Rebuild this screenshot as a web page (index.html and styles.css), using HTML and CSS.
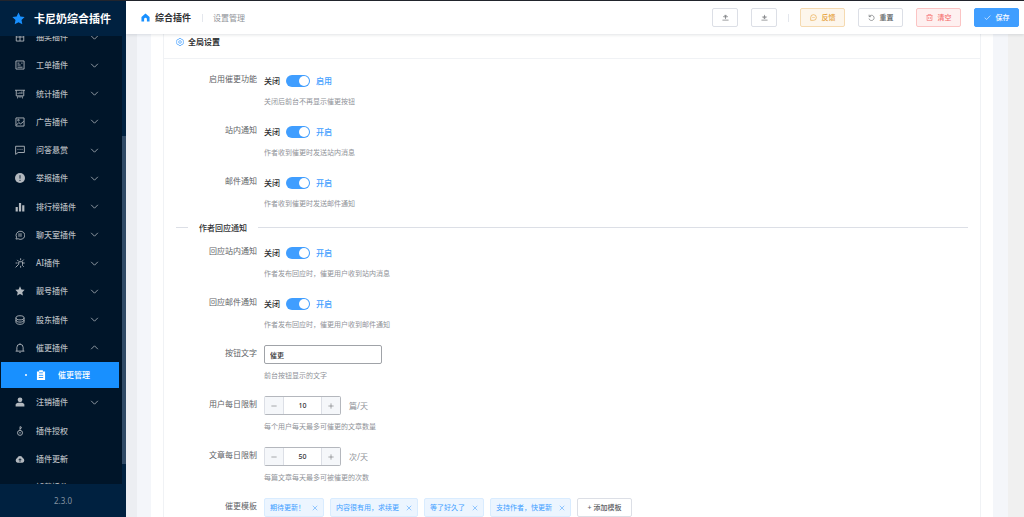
FILE: index.html
```html
<!DOCTYPE html>
<html lang="zh-CN">
<head>
<meta charset="utf-8">
<title>综合插件 - 设置管理</title>
<link rel="stylesheet" href="styles.css">
</head>
<body>
<svg class="sprite" aria-hidden="true">
  <symbol id="down" viewBox="0 0 16 16"><path d="M2 5l6 6 6-6"/></symbol>
  <symbol id="up" viewBox="0 0 16 16"><path d="M2 11l6-6 6 6"/></symbol>
  <symbol id="grid" viewBox="0 0 16 16"><path d="M2 1.500h12v13H2zM2 8h12M8 1.500v13"/></symbol>
  <symbol id="ticket" viewBox="0 0 16 16"><path d="M1.500 1.500h13v13h-13zM4 5h3M4 8h5M4 11.500h8M10 5h2"/></symbol>
  <symbol id="board" viewBox="0 0 16 16"><path d="M0 2h16M2 2v9h12V2M5 11l-1 4M11 11l1 4M5 8V6M8 8V5M11 8V4M8 11v3"/></symbol>
  <symbol id="image" viewBox="0 0 16 16"><path d="M1.500 1.500h13v13h-13zM2 13l4-4 3 2 5-4"/><circle cx="5.500" cy="5" r="1.300"/></symbol>
  <symbol id="chat" viewBox="0 0 16 16"><path d="M1 2h14v10H5l-4 3zM4 7h1.500M7.300 7h1.500M10.500 7H12"/></symbol>
  <symbol id="warn" viewBox="0 0 16 16"><circle class="fill" cx="8" cy="8" r="8"/><path class="cut" d="M8 3.500V9M8 11v1.800"/></symbol>
  <symbol id="bars" viewBox="0 0 16 16"><path class="fill" d="M1 8h3.500v7H1zM6.300 1.500h3.500V15H6.300zM11.500 5H15v10h-3.500z"/></symbol>
  <symbol id="round" viewBox="0 0 16 16"><path d="M1.500 14.500l1-3A7 6.500 0 1 1 5 14zM5 6.500h6M5 9.500h6"/></symbol>
  <symbol id="dots" viewBox="0 0 16 16"><path d="M1.500 14.500V8A6.500 6.500 0 1 1 8 14.500zM4.500 8H6M7.300 8h1.500M10 8h1.500"/></symbol>
  <symbol id="magic" viewBox="0 0 16 16"><path d="M1 15l5-5M9 .5v3M15.500 8h-3M3.500 3l2 2M14 2.500l-2.500 2.500M14 14l-2.500-2.500M1 8h3M9 12.500v3M6 6l6 0M12 6v5M6 6v4"/></symbol>
  <symbol id="star" viewBox="0 0 16 16"><path class="fill" d="M8 .5l2.300 4.900 5.200.7-3.800 3.700 1 5.400L8 12.600l-4.700 2.600 1-5.400L.5 6.100l5.200-.7z"/></symbol>
  <symbol id="coins" viewBox="0 0 16 16"><ellipse cx="8" cy="4.500" rx="6.500" ry="3.300"/><path d="M1.500 4.500v7c0 4.500 13 4.500 13 0v-7M1.500 8c0 4.500 13 4.500 13 0"/></symbol>
  <symbol id="bell" viewBox="0 0 16 16"><path d="M1 13h14M3 13V7a5 5 0 0 1 10 0v6M8 2V.5M7 15.300h2"/></symbol>
  <symbol id="clip" viewBox="0 0 16 16"><path class="fill" d="M1.500 2.500H5V.5h6v2h3.500V16h-13z"/><path class="cutblue" d="M5 4.500h6M4.500 8.500h7M4.500 12h7"/></symbol>
  <symbol id="user" viewBox="0 0 16 16"><circle class="fill" cx="8" cy="4.500" r="3.800"/><path class="fill" d="M1 15v-2.500c0-2 2-3.500 4-3.500h6c2 0 4 1.500 4 3.500V15z"/></symbol>
  <symbol id="key" viewBox="0 0 16 16"><circle cx="8" cy="11" r="4"/><circle cx="8" cy="11" r=".5"/><path d="M8 7V1l3 1.500M8 4h2"/></symbol>
  <symbol id="cloud" viewBox="0 0 16 16"><path class="fill" d="M4 14a4 4 0 0 1-.5-7.500 4.700 4.700 0 0 1 9 0A4 4 0 0 1 12 14z"/><path class="cut" d="M8 12.500V8M5.800 9.800L8 7.500l2.200 2.300"/></symbol>
  <symbol id="home" viewBox="0 0 16 16"><path class="fill" d="M8 1L.8 7v8.300h4.700V11a2.500 2.500 0 0 1 5 0v4.300h4.700V7z"/></symbol>
  <symbol id="upload" viewBox="0 0 16 16"><path d="M1 14h14M8 11.500V3M3.500 6.500L8 2l4.500 4.500z"/></symbol>
  <symbol id="download" viewBox="0 0 16 16"><path d="M1 14h14M8 2v8M3.500 6.500L8 11l4.500-4.500z"/></symbol>
  <symbol id="undo" viewBox="0 0 16 16"><path d="M2.500 1.500V6H7M3 5.500a6 6 0 1 1-.8 5"/></symbol>
  <symbol id="trash" viewBox="0 0 16 16"><path d="M1 3.500h14M5 3V1h6v2M2.500 3.500V15h11V3.500M6 7v4.500M10 7v4.500"/></symbol>
  <symbol id="check" viewBox="0 0 16 16"><path d="M1.500 8.500l4.500 4 8.500-9"/></symbol>
  <symbol id="close" viewBox="0 0 16 16"><path d="M2 2l12 12M14 2L2 14"/></symbol>
  <symbol id="minus" viewBox="0 0 16 16"><path d="M1 8h14"/></symbol>
  <symbol id="plus" viewBox="0 0 16 16"><path d="M1 8h14M8 1v14"/></symbol>
  <symbol id="gear" viewBox="0 0 16 16"><path d="M6 1h4l1 2 2.500.2 1.700 3.200L14 8l1.200 1.600-1.700 3.200-2.500.2-1 2H6l-1-2-2.500-.2L.8 9.600 2 8 .8 6.400l1.700-3.200L5 3z"/><circle cx="8" cy="8" r="2.700"/></symbol>
</svg>

<div class="app">
  <aside class="side">
    <div class="brand"><svg class="brand-icon"><use href="#star"/></svg><span>卡尼奶综合插件</span></div>
    <nav class="nav">
      <ul class="menu">
        <li><button class="item"><svg class="icon"><use href="#grid"/></svg><span>抽奖插件</span><svg class="arrow"><use href="#down"/></svg></button></li>
        <li><button class="item"><svg class="icon"><use href="#ticket"/></svg><span>工单插件</span><svg class="arrow"><use href="#down"/></svg></button></li>
        <li><button class="item"><svg class="icon"><use href="#board"/></svg><span>统计插件</span><svg class="arrow"><use href="#down"/></svg></button></li>
        <li><button class="item"><svg class="icon"><use href="#image"/></svg><span>广告插件</span><svg class="arrow"><use href="#down"/></svg></button></li>
        <li><button class="item"><svg class="icon"><use href="#chat"/></svg><span>问答悬赏</span><svg class="arrow"><use href="#down"/></svg></button></li>
        <li><button class="item"><svg class="icon"><use href="#warn"/></svg><span>举报插件</span><svg class="arrow"><use href="#down"/></svg></button></li>
        <li><button class="item"><svg class="icon"><use href="#bars"/></svg><span>排行榜插件</span><svg class="arrow"><use href="#down"/></svg></button></li>
        <li><button class="item"><svg class="icon"><use href="#round"/></svg><span>聊天室插件</span><svg class="arrow"><use href="#down"/></svg></button></li>
        <li><button class="item"><svg class="icon"><use href="#magic"/></svg><span>AI插件</span><svg class="arrow"><use href="#down"/></svg></button></li>
        <li><button class="item"><svg class="icon"><use href="#star"/></svg><span>靓号插件</span><svg class="arrow"><use href="#down"/></svg></button></li>
        <li><button class="item"><svg class="icon"><use href="#coins"/></svg><span>股东插件</span><svg class="arrow"><use href="#down"/></svg></button></li>
        <li><button class="item" aria-expanded="true"><svg class="icon"><use href="#bell"/></svg><span>催更插件</span><svg class="arrow"><use href="#up"/></svg></button></li>
        <li><a class="sub" href="#"><i class="dot"></i><svg class="icon"><use href="#clip"/></svg><span>催更管理</span></a></li>
        <li><button class="item"><svg class="icon"><use href="#user"/></svg><span>注销插件</span><svg class="arrow"><use href="#down"/></svg></button></li>
        <li><a class="item" href="#"><svg class="icon"><use href="#key"/></svg><span>插件授权</span></a></li>
        <li><a class="item" href="#"><svg class="icon"><use href="#cloud"/></svg><span>插件更新</span></a></li>
        <li><a class="item" href="#"><svg class="icon"></svg><span>卸载插件</span></a></li>
      </ul>
      <div class="track"><div class="thumb"></div></div>
    </nav>
    <div class="version">2.3.0</div>
  </aside>

  <div class="main">
    <header class="bar">
      <svg class="home"><use href="#home"/></svg>
      <h1 class="title">综合插件</h1>
      <i class="sep"></i>
      <span class="crumb">设置管理</span>
      <div class="actions">
        <button class="btn square" aria-label="上传"><svg class="small"><use href="#upload"/></svg></button>
        <button class="btn square" aria-label="下载"><svg class="small"><use href="#download"/></svg></button>
        <i class="sep"></i>
        <button class="btn warning"><svg class="small"><use href="#dots"/></svg>反馈</button>
        <button class="btn"><svg class="small"><use href="#undo"/></svg>重置</button>
        <button class="btn danger"><svg class="small"><use href="#trash"/></svg>清空</button>
        <button class="btn primary"><svg class="small"><use href="#check"/></svg>保存</button>
      </div>
    </header>

    <main class="page">
      <div class="sheet">
        <section class="card">
          <h2 class="card-title"><svg class="gear"><use href="#gear"/></svg>全局设置</h2>
          <form class="form">
            <div class="row"><label class="label" for="enable">启用催更功能</label><div class="field"><div class="control"><span class="off">关闭</span><input class="switch" id="enable" type="checkbox" checked><span class="on">启用</span></div><p class="help">关闭后前台不再显示催更按钮</p></div></div>
            <div class="row"><label class="label" for="site">站内通知</label><div class="field"><div class="control"><span class="off">关闭</span><input class="switch" id="site" type="checkbox" checked><span class="on">开启</span></div><p class="help">作者收到催更时发送站内消息</p></div></div>
            <div class="row"><label class="label" for="mail">邮件通知</label><div class="field"><div class="control"><span class="off">关闭</span><input class="switch" id="mail" type="checkbox" checked><span class="on">开启</span></div><p class="help">作者收到催更时发送邮件通知</p></div></div>
            <h3 class="divider">作者回应通知</h3>
            <div class="row"><label class="label" for="rsite">回应站内通知</label><div class="field"><div class="control"><span class="off">关闭</span><input class="switch" id="rsite" type="checkbox" checked><span class="on">开启</span></div><p class="help">作者发布回应时，催更用户收到站内消息</p></div></div>
            <div class="row"><label class="label" for="rmail">回应邮件通知</label><div class="field"><div class="control"><span class="off">关闭</span><input class="switch" id="rmail" type="checkbox" checked><span class="on">开启</span></div><p class="help">作者发布回应时，催更用户收到邮件通知</p></div></div>
            <div class="row"><label class="label" for="text">按钮文字</label><div class="field"><div class="control"><input class="text" id="text" type="text" value="催更"></div><p class="help">前台按钮显示的文字</p></div></div>
            <div class="row"><label class="label" for="user-limit">用户每日限制</label><div class="field"><div class="control"><div class="number"><button type="button" aria-label="减少"><svg><use href="#minus"/></svg></button><input id="user-limit" type="text" value="10"><button type="button" aria-label="增加"><svg><use href="#plus"/></svg></button></div><span class="unit">篇/天</span></div><p class="help">每个用户每天最多可催更的文章数量</p></div></div>
            <div class="row"><label class="label" for="post-limit">文章每日限制</label><div class="field"><div class="control"><div class="number"><button type="button" aria-label="减少"><svg><use href="#minus"/></svg></button><input id="post-limit" type="text" value="50"><button type="button" aria-label="增加"><svg><use href="#plus"/></svg></button></div><span class="unit">次/天</span></div><p class="help">每篇文章每天最多可被催更的次数</p></div></div>
            <div class="row"><span class="label">催更模板</span><div class="field"><div class="control tags">
              <span class="tag">期待更新！<button type="button" aria-label="删除"><svg><use href="#close"/></svg></button></span>
              <span class="tag">内容很有用，求续更<button type="button" aria-label="删除"><svg><use href="#close"/></svg></button></span>
              <span class="tag">等了好久了<button type="button" aria-label="删除"><svg><use href="#close"/></svg></button></span>
              <span class="tag">支持作者，快更新<button type="button" aria-label="删除"><svg><use href="#close"/></svg></button></span>
              <button type="button" class="btn add">+ 添加模板</button>
            </div></div></div>
          </form>
        </section>
      </div>
    </main>
  </div>
</div>
</body>
</html>
```

FILE: styles.css
```css
* { box-sizing: border-box; }
body {
  margin: 0;
  font: 8px/12px "Noto Sans", "Noto Sans CJK SC", sans-serif;
  color: #303133;
  background: #f0f0f0;
  overflow: hidden;
}
button, input { font: inherit; color: inherit; margin: 0; padding: 0; border: 0; background: none; }
a { color: inherit; text-decoration: none; }
ul, p, h1, h2, h3 { margin: 0; padding: 0; font-size: inherit; list-style: none; }
svg { fill: none; stroke: currentColor; stroke-width: 1.4; flex: none; }
.fill { fill: currentColor; stroke: none; }
.cut { stroke: #001529; }
.cutblue { stroke: #1890ff; }
.sprite { display: none; }

.app { display: flex; height: 100vh; border-top: 1px solid #22252d; }

/* sidebar */
.side {
  display: flex;
  flex-direction: column;
  flex: none;
  width: 126px;
  background: #001529;
  color: #b3b9bf;
}
.brand {
  display: flex;
  align-items: center;
  gap: 9px;
  height: 35px;
  padding-left: 12px;
  background: #002140;
  color: #fff;
  font-size: 11px;
  font-weight: 700;
  line-height: 16px;
}
.brand-icon { width: 13px; height: 13px; color: #1890ff; }
.nav { display: flex; flex: 1; min-height: 0; overflow: hidden; }
.menu {
  display: flex;
  flex-direction: column;
  flex: 1;
  justify-content: space-between;
  height: calc(100% + 30px);
  margin-top: -13px;
}
.item {
  display: flex;
  align-items: center;
  width: 100%;
  height: 28px;
  padding: 0 23px 0 15px;
  font-weight: 500;
  text-align: left;
}
.icon { width: 10px; height: 10px; }
.item span { flex: 1; margin-left: 11px; }
.arrow { width: 9px; height: 9px; }
.sub {
  display: flex;
  align-items: center;
  height: 26px;
  margin: 0 3px 0 1px;
  padding-left: 24px;
  background: #1890ff;
  color: #fff;
  font-weight: 500;
}
.dot { width: 2px; height: 2px; margin-right: 9px; border-radius: 50%; background: #fff; }
.sub span { margin-left: 12px; }
.track { width: 4px; padding-top: 100px; background: #002140; }
.thumb { height: 328px; background: #304a66; }
.version {
  display: flex;
  align-items: center;
  justify-content: center;
  height: 33px;
  background: #002140;
  color: #8492a1;
}

/* top bar */
.main { display: flex; flex-direction: column; flex: 1; min-width: 0; }
.bar {
  display: flex;
  align-items: center;
  flex: none;
  height: 33px;
  padding: 0 5px 0 15px;
  background: #fff;
  box-shadow: 0 1px 3px rgba(0, 21, 41, .12);
  z-index: 1;
}
.home { width: 9px; height: 9px; margin-right: 5px; color: #1890ff; }
.title { font-size: 9px; font-weight: 600; }
.sep { width: 1px; height: 8px; background: #e4e7ed; }
.title + .sep { margin: 0 10px 0 11px; }
.crumb { color: #909399; }
.actions { display: flex; align-items: center; gap: 13px; margin-left: auto; }
.actions .sep { margin: 0 -2px; }
.btn {
  display: flex;
  align-items: center;
  justify-content: center;
  gap: 5px;
  width: 45px;
  height: 19px;
  border: 1px solid #dcdfe6;
  border-radius: 2px;
  background: #fff;
  color: #606266;
  font-size: 7px;
  font-weight: 500;
}
.small { width: 7px; height: 7px; }
.square { width: 26px; }
.warning { border-color: #f5dab1; background: #fdf6ec; color: #e6a23c; }
.danger { border-color: #fbc4c4; background: #fef0f0; color: #f56c6c; }
.primary { border-color: #409eff; background: #409eff; color: #fff; }

/* content */
.page {
  flex: 1;
  min-height: 0;
  padding: 0 16px 0 11px;
  overflow: hidden;
  background: linear-gradient(to right, #eceef2 11px, #f0f0f0 11px);
}
.sheet {
  padding: 0 12px;
  border: solid #f4f6fa;
  border-width: 0 15px 0 14px;
  background: #fff;
}
.card { border: 1px solid #f0f2f5; border-top: 0; }
.card-title {
  display: flex;
  align-items: center;
  gap: 5px;
  height: 25px;
  padding: 0 12px 8px;
  border-bottom: 1px solid #f0f2f5;
  font-weight: 700;
}
.gear { width: 8px; height: 8px; color: #409eff; }
.card-title .gear { margin-right: -1px; }
.form { padding: 12px; }
.row { display: flex; gap: 7px; height: 51px; }
.label { width: 81px; height: 16px; color: #606266; line-height: 16px; text-align: right; }
.field { flex: 1; }
.control { display: flex; align-items: center; height: 19px; }
.off, .on { font-weight: 500; }
.on { color: #409eff; }
.switch {
  appearance: none;
  display: flex;
  justify-content: flex-end;
  width: 24px;
  height: 12px;
  margin: 0 6px;
  padding: 1px;
  border-radius: 6px;
  background: #409eff;
}
.switch::before { content: ""; width: 10px; height: 10px; border-radius: 50%; background: #fff; }
.help { margin-top: 6px; color: #909399; font-size: 7px; }
.divider { display: flex; align-items: center; gap: 11px; height: 7px; margin-bottom: 12px; font-weight: 500; }
.divider::before, .divider::after { content: ""; width: 12px; height: 1px; background: #dcdfe6; }
.divider::after { flex: 1; }
.text { width: 118px; height: 19px; padding: 0 5px; border: 1px solid #a0a3a8; border-radius: 2px; }
.number { display: flex; width: 77px; height: 19px; border: 1px solid #b4b7bd; border-left-color: #dcdfe6; border-radius: 2px; overflow: hidden; }
.number button { display: flex; align-items: center; justify-content: center; width: 18px; background: #f5f7fa; color: #606266; }
.number input { flex: 1; min-width: 0; border: solid #dcdfe6; border-width: 0 1px; text-align: center; }
.text, .number input { font-size: 7px; font-weight: 500; }
.number svg { width: 6px; height: 6px; }
.unit { margin-left: 8px; color: #909399; }
.tags { gap: 6px; }
.tag {
  display: flex;
  align-items: center;
  height: 19px;
  padding: 0 5px;
  border: 1px solid #d9ecff;
  border-radius: 2px;
  background: #ecf5ff;
  color: #409eff;
  font-size: 7px;
}
.tag button { display: flex; margin-left: 7px; }
.tag svg { width: 6px; height: 6px; }
.add { width: 55px; }
```
